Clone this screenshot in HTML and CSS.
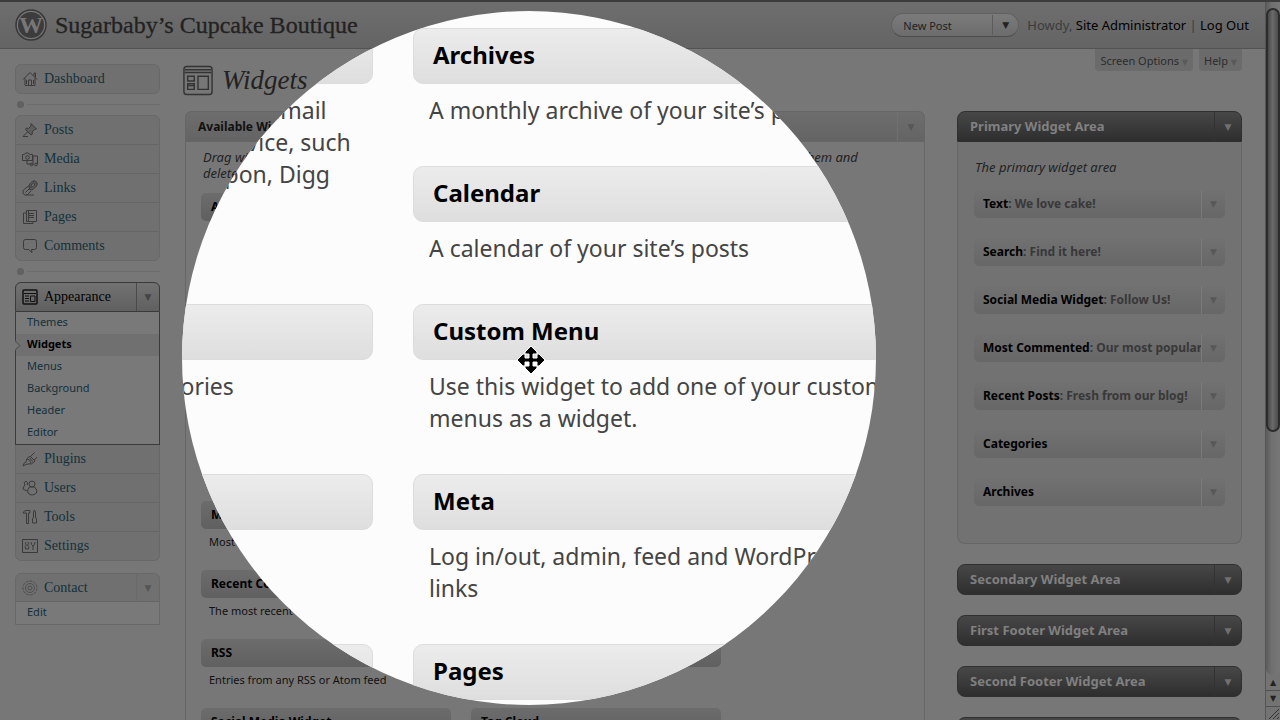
FILE: index.html
```
<!DOCTYPE html>
<html lang="en">
<head>
    <meta charset="UTF-8">
    <meta name="viewport" content="width=device-width, initial-scale=1.0">
    <title>Widgets - Sugarbaby’s Cupcake Boutique</title>
    <link rel="stylesheet" href="styles.css">
</head>
<body>
    <div class="page">
        <header class="top">
            <svg class="logo" viewBox="0 0 32 32">
                <circle cx="16" cy="16" r="15" fill="#777" stroke="#383838" stroke-width="1.5"/>
                <circle cx="16" cy="16" r="13" fill="#3c3c3c"/>
                <text x="16" y="24" text-anchor="middle" class="logo-w">W</text>
            </svg>
            <h1><a href="#">Sugarbaby’s Cupcake Boutique</a></h1>
            <div class="favorite">
                <a href="#">New Post</a>
                <button class="fav-arrow" aria-label="More actions">▼</button>
            </div>
            <p class="user">Howdy, <a href="#">Site Administrator</a> | <a href="#">Log Out</a></p>
        </header>

        <div class="content">
            <nav class="menu">
                <ul class="group">
                    <li><a href="#"><svg viewBox="0 0 16 16"><path d="M1 8.500 8 1.500l7 7M3 7v7.500h10V7M12 5V2h1.500v4.500M6.500 14.500V9h3v5.500M4.500 9v4M11.500 9v4"/></svg>Dashboard</a></li>
                </ul>
                <div class="separator"></div>
                <ul class="group">
                    <li><a href="#"><svg viewBox="0 0 16 16"><path fill="#5c5c5c" d="M9 1.500 14.500 7l-2 .5-2.500 2.500.5 2-1.500 1L3.500 7.500l1-1.500 2 .5L9 4z"/><path d="M5.500 10 1 14.500M1 14.500h5"/></svg>Posts</a></li>
                    <li><a href="#"><svg viewBox="0 0 16 16"><path d="M.5 3.500h2l1-1.500h3l1 1.500h3v6H.5zM11 5h4.500v8M11 5v9M5 10v3h5"/><circle cx="5.500" cy="6.500" r="1.800"/><circle cx="9.500" cy="13.500" r="1.300"/><circle cx="14" cy="13.500" r="1.300"/></svg>Media</a></li>
                    <li><a href="#"><svg viewBox="0 0 16 16"><path fill="#5c5c5c" fill-rule="evenodd" d="m7 5 3-3.500q3-1.500 4.500.5t0 4L11 9.500q-2 1-3.500 0zM9 5l2.500-2q2 0 1 2L10 7.500z"/><path d="M7.500 6.500q-1-.5-2.500.5L1.500 10q-1.500 2 0 4t4 .500L9 11M3.500 12.500l5-5M4 15h8"/></svg>Links</a></li>
                    <li><a href="#"><svg viewBox="0 0 16 16"><path d="M4.500 1.500h10v11h-10zM4 4H1.500v10.500H11V13M7 4.500h5M7 6.500h5M7 8.500h5M6.500 2v10"/></svg>Pages</a></li>
                    <li><a href="#"><svg viewBox="0 0 16 16"><path d="M3.500 1.500h9q2 0 2 2v6q0 2-2 2h-3l.5 3-3.500-3h-3q-2 0-2-2v-6q0-2 2-2z"/></svg>Comments</a></li>
                </ul>
                <div class="separator"></div>
                <ul class="group joined">
                    <li class="current">
                        <a href="#"><svg viewBox="0 0 16 16"><rect x="1" y="1" width="14" height="14" rx="1" stroke-width="1.500"/><path d="M2 4.500h12M3 7h4M3 9.500h4M3 12h4M8.500 7h4.500v5.500H8.500z"/></svg>Appearance</a>
                        <button class="toggle" aria-label="Toggle Appearance">▼</button>
                    </li>
                    <li class="submenu">
                        <a href="#">Themes</a>
                        <a href="#" class="active">Widgets</a>
                        <a href="#">Menus</a>
                        <a href="#">Background</a>
                        <a href="#">Header</a>
                        <a href="#">Editor</a>
                    </li>
                    <li><a href="#"><svg viewBox="0 0 16 16"><path d="M1 15q1-4 3-4 0-4 4-6l5 5q-3 4-7 3-2 0-5 2zM9 5l3.500-3.500M12.500 9 15 6M5 8q3 0 4 4M7.500 7q2 1 3 3.500"/></svg>Plugins</a></li>
                    <li><a href="#"><svg viewBox="0 0 16 16"><circle cx="10" cy="4" r="3"/><path d="M7.500 7q-3 3-1.500 6 4 4 8.500 0 1.500-3-2-6zM3 5q-2-3 1-4 2 1 1.500 4M3 5q-2 2-2 4l4 2"/></svg>Users</a></li>
                    <li><a href="#"><svg viewBox="0 0 16 16"><path d="M1 4q1-2.500 3-2.500h4V4H6.500v10.500h-2V4zM11.500 8V3l1-2 1 2v5q1.500 1 1 6h-4q-.5-5 1-6z"/></svg>Tools</a></li>
                    <li><a href="#"><svg viewBox="0 0 16 16"><path d="M.5 1.500h15v13H.5zM4 4q-1.500 2 .5 3-2 1-1 4h3q1-3-1-4 2-1 .5-3M9 4q0 3 2 4v4M13 4q0 3-2 4"/></svg>Settings</a></li>
                </ul>
                <ul class="group contact">
                    <li><a href="#"><svg viewBox="0 0 16 16" opacity=".6"><circle cx="8" cy="8" r="7" stroke-dasharray="3 1"/><circle cx="8" cy="8" r="4.500"/><circle cx="8" cy="8" r="2"/></svg>Contact</a>
                        <button class="toggle faint" aria-label="Toggle Contact">▼</button></li>
                    <li class="submenu"><a href="#">Edit</a></li>
                </ul>
            </nav>

            <main class="main">
                <div class="tabs">
                    <button>Screen Options <span>▼</span></button>
                    <button>Help <span>▼</span></button>
                </div>
                <h2><svg viewBox="0 0 32 32"><rect x="1" y="1" width="30" height="30" rx="3"/><path d="M2 4.500h28M2 7.500h28M5 11.500h7v5H5zM16 11.500h11v14H16zM5 19.500h7v6H5zM5 21.500h7"/></svg>Widgets</h2>

                <div class="columns">
                    <section class="available">
                        <div class="bar light"><h3>Available Widgets</h3><button aria-label="Toggle available widgets">▼</button></div>
                        <p class="hint">Drag widgets from here to a sidebar on the right to activate them. Drag widgets back here to deactivate them and<br>delete their settings.</p>
                        <div class="widgets">
                            <div class="stack">
                                <div class="item double"><h4>Add to Any</h4><p>Help people share, bookmark, and email</p></div>
                                <div class="item tall"><h4>Categories</h4><p>A list or dropdown of categories</p></div>
                                <div class="item tall"><h4>Links</h4><p>Your blogroll</p></div>
                                <div class="item"><h4>Most Commented</h4><p>Most commented posts</p></div>
                                <div class="item"><h4>Recent Comments</h4><p>The most recent comments</p></div>
                                <div class="item"><h4>RSS</h4><p>Entries from any RSS or Atom feed</p></div>
                                <div class="item"><h4>Social Media Widget</h4></div>
                            </div>
                            <div class="stack">
                                <div class="item"><h4>Archives</h4></div>
                                <div class="item"><h4>Calendar</h4></div>
                                <div class="item tall"><h4>Custom Menu</h4></div>
                                <div class="item tall"><h4>Meta</h4></div>
                                <div class="item"><h4>Pages</h4></div>
                                <div class="item"><h4>Recent Posts</h4></div>
                                <div class="item"><h4>Search</h4></div>
                                <div class="item"><h4>Tag Cloud</h4></div>
                            </div>
                        </div>
                    </section>

                    <aside class="areas">
                        <section class="area">
                            <div class="bar"><h3>Primary Widget Area</h3><button aria-label="Toggle primary area">▼</button></div>
                            <div class="area-body">
                                <p>The primary widget area</p>
                                <div class="used"><h4>Text<span>: We love cake!</span></h4><button aria-label="Edit Text">▼</button></div>
                                <div class="used"><h4>Search<span>: Find it here!</span></h4><button aria-label="Edit Search">▼</button></div>
                                <div class="used"><h4>Social Media Widget<span>: Follow Us!</span></h4><button aria-label="Edit Social Media Widget">▼</button></div>
                                <div class="used"><h4>Most Commented<span>: Our most popular</span></h4><button aria-label="Edit Most Commented">▼</button></div>
                                <div class="used"><h4>Recent Posts<span>: Fresh from our blog!</span></h4><button aria-label="Edit Recent Posts">▼</button></div>
                                <div class="used"><h4>Categories</h4><button aria-label="Edit Categories">▼</button></div>
                                <div class="used"><h4>Archives</h4><button aria-label="Edit Archives">▼</button></div>
                            </div>
                        </section>
                        <div class="bar closed"><h3>Secondary Widget Area</h3><button aria-label="Toggle secondary area">▼</button></div>
                        <div class="bar closed"><h3>First Footer Widget Area</h3><button aria-label="Toggle first footer area">▼</button></div>
                        <div class="bar closed"><h3>Second Footer Widget Area</h3><button aria-label="Toggle second footer area">▼</button></div>
                        <div class="bar closed"></div>
                    </aside>
                </div>
            </main>
        </div>
    </div>

    <div class="scroll">
        <div class="track"><div class="thumb"></div></div>
        <button aria-label="Scroll up">▲</button>
        <button aria-label="Scroll down">▼</button>
        <svg viewBox="0 0 14 13"><path d="M3 12 13 2M7 12l6-6M11 12l2-2"/></svg>
    </div>

    <!-- round lens, shows the widget list at double size -->
    <div class="lens">
        <div class="zoomed">
            <div class="stack">
                <div class="item double"><h4>Add to Any</h4><p>Help people share, bookmark, and email<br>your posts &amp; pages using any service, such<br>as Facebook, Twitter, StumbleUpon, Digg</p></div>
                <div class="item tall"><h4>Categories</h4><p>A list or dropdown of categories</p></div>
                <div class="item tall"><h4>Links</h4></div>
                <div class="item"><h4>Most Commented</h4></div>
            </div>
            <div class="stack">
                <div class="item"><h4>Archives</h4><p>A monthly archive of your site’s posts</p></div>
                <div class="item"><h4>Calendar</h4><p>A calendar of your site’s posts</p></div>
                <div class="item tall"><h4>Custom Menu</h4><p>Use this widget to add one of your custom<br>menus as a widget.</p></div>
                <div class="item tall"><h4>Meta</h4><p>Log in/out, admin, feed and WordPress<br>links</p></div>
                <div class="item"><h4>Pages</h4></div>
            </div>
        </div>
        <svg class="cursor" viewBox="0 0 30 30"><path d="m15 1 6 6v2h-4v4h4V9h2l6 6-6 6h-2v-4h-4v4h4v2l-6 6-6-6v-2h4v-4H9v4H7l-6-6 6-6h2v4h4V9H9V7z"/></svg>
    </div>
</body>
</html>
```
FILE: styles.css
```
*{
    box-sizing: border-box;
}
body{
    margin: 0;
    height: 100vh;
    overflow: hidden;
    display: flex;
    position: relative;
    background-color: #777;
    border-top: 2px solid #3c3c3c;
    font-family: "Noto Sans", "Open Sans", sans-serif;
    font-size: 11px;
    color: #222;
}
h1, h2, h3, h4, p, ul{
    margin: 0;
    padding: 0;
    font-weight: normal;
}
ul{
    list-style: none;
}
a{
    color: inherit;
    text-decoration: none;
}
button{
    border: none;
    padding: 0;
    background: none;
    color: #4c4c4c;
    font-family: "DejaVu Sans", sans-serif;
    font-size: 9px;
}
.page{
    flex: 1;
    min-width: 0;
    overflow: hidden;
}

/* header */
.top{
    height: 47px;
    display: flex;
    align-items: center;
    padding: 0 16px 0 15px;
    background: linear-gradient(#6e6e6e, #646464);
    border-bottom: 1px solid #535353;
}
.logo{
    width: 32px;
    height: 32px;
}
.logo-w{
    font: bold 24px "Liberation Serif", serif;
    fill: #777;
}
.top h1{
    flex: 1;
    padding-left: 8px;
    font-family: "Liberation Serif", serif;
    font-size: 24px;
    color: #222;
    -webkit-text-stroke: 0.3px #222;
}
.favorite{
    width: 128px;
    height: 24px;
    display: flex;
    align-items: center;
    border: 1px solid #606060;
    border-bottom-color: #4c4c4c;
    border-radius: 12px;
    background: linear-gradient(#7b7b7b, #6c6c6c);
}
.favorite a{
    flex: 1;
    padding-left: 11px;
}
.fav-arrow{
    width: 26px;
    height: 20px;
    border-left: 1px solid #5c5c5c;
    color: #222;
}
.user{
    padding-left: 8px;
    font-size: 13px;
    color: #3c3c3c;
}
.user a{
    color: #000;
}

/* left menu */
.content{
    display: flex;
    gap: 25px;
    padding: 0 23px 0 15px;
}
.menu{
    width: 145px;
    padding-top: 15px;
}
.group{
    border: 1px solid #686868;
    border-radius: 6px;
    background-color: #707070;
}
.group li{
    height: 29px;
    display: flex;
    border-bottom: 1px solid #666;
}
.group li:last-child{
    height: 28px;
    border-bottom: none;
}
.group li > a{
    flex: 1;
    display: flex;
    align-items: center;
    gap: 6px;
    padding-left: 6px;
    font-family: "Liberation Serif", serif;
    font-size: 14px;
    color: #13303a;
}
.group svg{
    width: 16px;
    height: 16px;
    fill: none;
    stroke: #3a3a3a;
}
.separator{
    height: 21px;
    display: flex;
    align-items: center;
}
.separator::before{
    content: "";
    width: 7px;
    height: 7px;
    margin: 0 3px 0 2px;
    border-radius: 4px;
    background-color: #616161;
}
.separator::after{
    content: "";
    flex: 1;
    height: 1px;
    background-color: #6c6c6c;
}
.toggle{
    width: 23px;
    border-left: 1px solid #4a4a4a;
    color: #444;
}
.toggle.faint{
    border-color: #6a6a6a;
    color: #555;
}
.group .current{
    height: 30px;
    margin: -1px -1px 0;
    border: 1px solid #3a3a3a;
    border-radius: 6px 6px 0 0;
    background: linear-gradient(#727272, #606060);
}
.group .current > a{
    color: #000;
}
.current svg{
    stroke: #111;
}
.group li.submenu{
    height: auto;
    display: block;
    background-color: #797979;
}
.joined .submenu{
    margin: 0 -1px;
    border: 1px solid #3a3a3a;
    border-top: none;
}
.group .submenu > a{
    display: block;
    position: relative;
    height: 22px;
    padding-left: 11px;
    font-family: "Noto Sans", "Open Sans", sans-serif;
    font-size: 11px;
    line-height: 20px;
}
.group .submenu > .active{
    background-color: #707070;
    font-weight: bold;
    color: #000;
}
.active::before{
    content: "";
    position: absolute;
    left: -4px;
    top: 8px;
    width: 6px;
    height: 6px;
    border-top: 1px solid #555;
    border-right: 1px solid #555;
    transform: rotate(45deg);
    background-color: #777;
}
.contact{
    margin-top: 12px;
    border-radius: 6px 6px 0 0;
}
.contact li:first-child{
    height: 28px;
}

/* main column */
.main{
    flex: 1;
    min-width: 0;
}
.tabs{
    display: flex;
    justify-content: flex-end;
    gap: 6px;
    height: 16px;
}
.tabs button{
    height: 22px;
    padding: 0 5px;
    border-radius: 0 0 4px 4px;
    background-color: #6b6b6b;
    font-family: "Noto Sans", "Open Sans", sans-serif;
    font-size: 11px;
    color: #2c2c2c;
}
.tabs span{
    font-family: "DejaVu Sans", sans-serif;
    font-size: 8px;
    color: #5a5a5a;
}
.main h2{
    display: flex;
    align-items: center;
    gap: 9px;
    height: 31px;
    margin-left: -2px;
    font-family: "Liberation Serif", serif;
    font-size: 27px;
    font-style: italic;
}
.main h2 svg{
    width: 30px;
    height: 31px;
    fill: none;
    stroke: #333;
    stroke-width: 1.5;
}
.columns{
    display: flex;
    align-items: flex-start;
    gap: 32px;
    padding-top: 15px;
}
.bar{
    height: 31px;
    display: flex;
    border-radius: 8px;
    background: linear-gradient(#474747, #2e2e2e);
    border: 1px solid #303030;
}
.bar h3{
    flex: 1;
    padding-left: 12px;
    font-size: 13px;
    font-weight: bold;
    line-height: 29px;
    color: #808080;
}
.bar button{
    width: 27px;
    border-left: 1px solid #333;
    color: #707070;
}
.bar.light{
    background: linear-gradient(#6d6d6d, #646464);
    border-color: #666;
    border-radius: 7px 7px 0 0;
}
.bar.light h3{
    font-size: 12px;
    color: #111;
}
.bar.light button{
    border-color: #707070;
    color: #565656;
}
.available{
    flex: 1;
    min-width: 0;
    border: 1px solid #666;
    border-top: none;
    border-radius: 7px 7px 0 0;
}
.available .light{
    margin: 0 -1px;
}
.hint{
    padding: 7px 17px 12px;
    font-size: 13px;
    font-style: italic;
    line-height: 16px;
    white-space: nowrap;
}
.widgets{
    display: flex;
    gap: 20px;
    padding: 0 15px;
}
.widgets .stack{
    width: 250px;
}
.item{
    height: 69px;
}
.item.tall{
    height: 85px;
}
.item.double{
    height: 138px;
}
.item h4{
    height: 28px;
    padding-left: 10px;
    border-radius: 5px;
    background: linear-gradient(#6c6c6c, #606060);
    font-size: 12px;
    font-weight: bold;
    line-height: 27px;
    color: #000;
}
.item p{
    padding: 5px 8px;
    line-height: 16px;
    color: #111;
}

/* widget areas */
.areas{
    width: 285px;
}
.area .bar{
    border-radius: 8px 8px 0 0;
}
.area-body{
    height: 402px;
    padding: 16px 16px 0;
    border: 1px solid #666;
    border-top: none;
    border-radius: 0 0 8px 8px;
    background-color: #727272;
}
.area-body > p{
    padding-left: 1px;
    font-size: 13px;
    font-style: italic;
    line-height: 18px;
    margin-bottom: 14px;
}
.used{
    height: 28px;
    margin-bottom: 20px;
    display: flex;
    border-radius: 5px;
    background: linear-gradient(#717171, #676767);
}
.used h4{
    flex: 1;
    min-width: 0;
    overflow: hidden;
    padding-left: 9px;
    font-weight: bold;
    font-size: 12px;
    line-height: 28px;
    white-space: nowrap;
    color: #000;
}
.used span{
    color: #383838;
}
.used button{
    width: 24px;
    border-left: 1px solid #7a7a7a;
    color: #585858;
}
.closed{
    margin-top: 20px;
}

/* scrollbar */
.scroll{
    width: 15px;
    display: flex;
    flex-direction: column;
    border-left: 1px solid #555;
    background-color: #737373;
}
.track{
    flex: 1;
    padding-top: 6px;
    border-radius: 0 0 7px 7px;
    background: linear-gradient(90deg, #5c5c5c, #707070 40%, #777);
}
.thumb{
    height: 424px;
    border: 2px solid #2c2c2c;
    border-radius: 7px;
    background: linear-gradient(90deg, #484848, #6a6a6a 45%, #4c4c4c);
}
.scroll button{
    height: 16px;
    border-bottom: 1px solid #505050;
    font-size: 8px;
    color: #222;
}
.scroll svg{
    height: 13px;
    stroke: #333;
}

/* lens */
.lens{
    position: absolute;
    left: 182px;
    top: 9px;
    width: 694px;
    height: 694px;
    border-radius: 50%;
    overflow: hidden;
    background-color: #fcfcfc;
}
.zoomed{
    display: flex;
    gap: 40px;
    width: 1040px;
    margin: 17px 0 0 -309px;
}
.zoomed .stack{
    width: 500px;
}
.zoomed .item{
    height: 138px;
}
.zoomed .item.tall{
    height: 170px;
}
.zoomed .item.double{
    height: 276px;
}
.zoomed .item h4{
    height: 56px;
    padding-left: 19px;
    border: 1px solid #dcdcdc;
    border-radius: 10px;
    background: linear-gradient(#ececec, #dedede);
    font-size: 24px;
    line-height: 52px;
}
.zoomed .item p{
    padding: 10px 16px;
    font-size: 23px;
    line-height: 32px;
    color: #444;
    white-space: nowrap;
}
.cursor{
    position: absolute;
    left: 334px;
    top: 334px;
    width: 30px;
    height: 30px;
    fill: #000;
    stroke: #fff;
}
```
